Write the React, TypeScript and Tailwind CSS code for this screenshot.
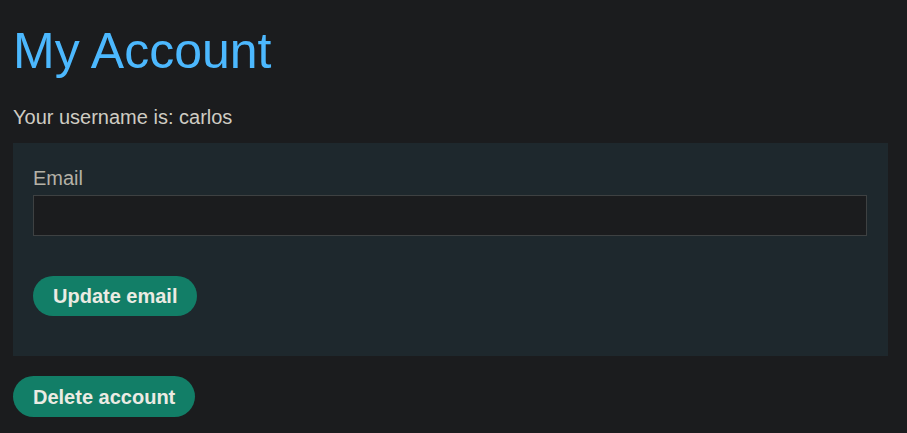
export default function App() {
  return (
    <div className="min-h-screen bg-[#1b1c1e] pl-[13px] pr-[19px] pt-[23px] pb-4 font-['Liberation_Sans',Arial,sans-serif]">
      <h1 className="text-[50px] leading-[56px] text-[#4cb8fe]">My Account</h1>
      <p className="mt-[27px] text-[20px] leading-[23px] text-[#cfccc3]">Your username is: carlos</p>

      <form className="mt-[14px] bg-[#1e282d] pl-5 pr-[21px] pt-[24px] pb-[40px]">
        <label className="block text-[20px] leading-[23px] text-[#b5b1a6]">Email</label>
        <input
          type="email"
          className="mt-[5px] block h-[41px] w-full border border-[#3e4142] bg-[#1b1c1e] px-2 text-[18px] text-[#cfccc3] outline-none"
        />
        <button
          type="button"
          className="mt-[40px] h-[40px] rounded-full bg-[#127e67] px-5 text-[20px] font-bold text-[#ebebe3]"
        >
          Update email
        </button>
      </form>

      <button
        type="button"
        className="mt-[20px] h-[41px] rounded-full bg-[#127e67] px-5 text-[20px] font-bold text-[#ebebe3]"
      >
        Delete account
      </button>
    </div>
  )
}
